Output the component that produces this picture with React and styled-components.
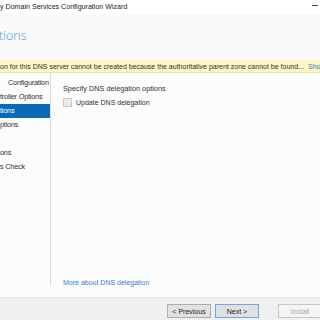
import styled, { createGlobalStyle } from "styled-components";

const Global = createGlobalStyle`
  html, body {
    margin: 0;
    padding: 0;
    background: #fafafa;
  }
  body {
    font-family: "Liberation Sans", Arial, sans-serif;
    font-size: 7px;
    color: #333;
  }
`;

const Window = styled.div`
  width: 320px;
  height: 320px;
  overflow: hidden;
  display: flex;
  flex-direction: column;
  white-space: nowrap;
`;

const TitleBar = styled.div`
  height: 14px;
  flex: none;
  background: #fff;
  display: flex;
  align-items: center;
  justify-content: space-between;
  font-size: 7.1px;
  color: #222;
  padding-bottom: 1px;
  box-sizing: border-box;
`;

const MinButton = styled.span`
  width: 6px;
  height: 1px;
  margin-right: 2px;
  background: #444;
  align-self: flex-start;
  margin-top: 5px;
`;

const Header = styled.div`
  height: 46px;
  flex: none;
  background: #fafafa;
  display: flex;
  align-items: center;
`;

const Heading = styled.h1`
  margin: 0 0 1px -1px;
  font-family: "Open Sans", "Liberation Sans", sans-serif;
  font-weight: 300;
  font-size: 12.5px;
  color: #3c9bd6;
  line-height: 1;
`;

const Warning = styled.div`
  height: 13px;
  flex: none;
  background: #fcf6c4;
  border-bottom: 1px solid #eee6a8;
  display: flex;
  align-items: center;
  overflow: hidden;
  color: #333;
  box-sizing: border-box;
`;

const ShowMore = styled.span`
  color: #2f7fc1;
  margin-left: auto;
  padding-left: 4px;
  flex: none;
  width: 12px;
  overflow: hidden;
`;

const Main = styled.div`
  flex: 1;
  display: flex;
  background: #fcfcfc;
  padding-bottom: 11px;
`;

const Nav = styled.ul`
  list-style: none;
  margin: 0;
  padding: 3px 0 0;
  width: 50px;
  flex: none;
  border-right: 1px solid #dcdcdc;
`;

const NavItem = styled.li`
  height: 14px;
  line-height: 14px;
  font-size: 7.3px;
  padding-left: ${(p) => p.$indent || 0}px;
  letter-spacing: -0.2px;
  background: ${(p) => (p.$active ? "#0b6ab7" : "transparent")};
  color: ${(p) => (p.$active ? "#fff" : "#333")};
  overflow: hidden;
`;

const Content = styled.div`
  flex: 1;
  display: flex;
  flex-direction: column;
  padding: 11px 0 0 12px;
`;

const Label = styled.div`
  height: 10px;
  line-height: 10px;
  font-size: 7.3px;
  color: #333;
`;

const CheckRow = styled.label`
  display: flex;
  align-items: center;
  gap: 4px;
  margin-top: 4px;
  color: #333;
`;

const Box = styled.span`
  width: 7px;
  height: 7px;
  border: 1px solid #c9c9c9;
  background: #e9e9e9;
  flex: none;
`;

const Link = styled.a`
  margin-top: auto;
  color: #3a7fc2;
  text-decoration: none;
  line-height: 10px;
  margin-bottom: -2px;
`;

const Footer = styled.div`
  height: 23px;
  flex: none;
  box-sizing: border-box;
  border-top: 1px solid #e3e3e3;
  background: #f0f0f0;
  display: flex;
  align-items: flex-end;
  padding: 0 0 2px 167px;
  gap: 4px;
`;

const Button = styled.button`
  width: 44px;
  height: 14px;
  flex: none;
  padding: 0;
  margin-left: ${(p) => p.$gap || 0}px;
  font-family: inherit;
  font-size: 7px;
  border: 1px solid ${(p) => (p.$default ? "#6ea8e0" : p.disabled ? "#c6c6c6" : "#adadad")};
  background: ${(p) => (p.disabled ? "#f4f4f4" : "#e1e1e1")};
  color: ${(p) => (p.disabled ? "#a8a8a8" : "#222")};
`;

const App = () => {
  return (
    <>
      <Global />
      <Window>
        <TitleBar>
          <span>y Domain Services Configuration Wizard</span>
          <MinButton />
        </TitleBar>
        <Header>
          <Heading>tions</Heading>
        </Header>
        <Warning>
          <span>on for this DNS server cannot be created because the authoritative parent zone cannot be found...</span>
          <ShowMore>Sho</ShowMore>
        </Warning>
        <Main>
          <Nav>
            <NavItem $indent={8}>Configuration</NavItem>
            <NavItem>troller Options</NavItem>
            <NavItem $active>tions</NavItem>
            <NavItem>ptions</NavItem>
            <NavItem />
            <NavItem>ons</NavItem>
            <NavItem>s Check</NavItem>
          </Nav>
          <Content>
            <Label>Specify DNS delegation options</Label>
            <CheckRow>
              <Box />
              <span>Update DNS delegation</span>
            </CheckRow>
            <Link href="#">More about DNS delegation</Link>
          </Content>
        </Main>
        <Footer>
          <Button>&lt; Previous</Button>
          <Button $default>Next &gt;</Button>
          <Button $gap={15} disabled>Install</Button>
        </Footer>
      </Window>
    </>
  );
};

export default App;
